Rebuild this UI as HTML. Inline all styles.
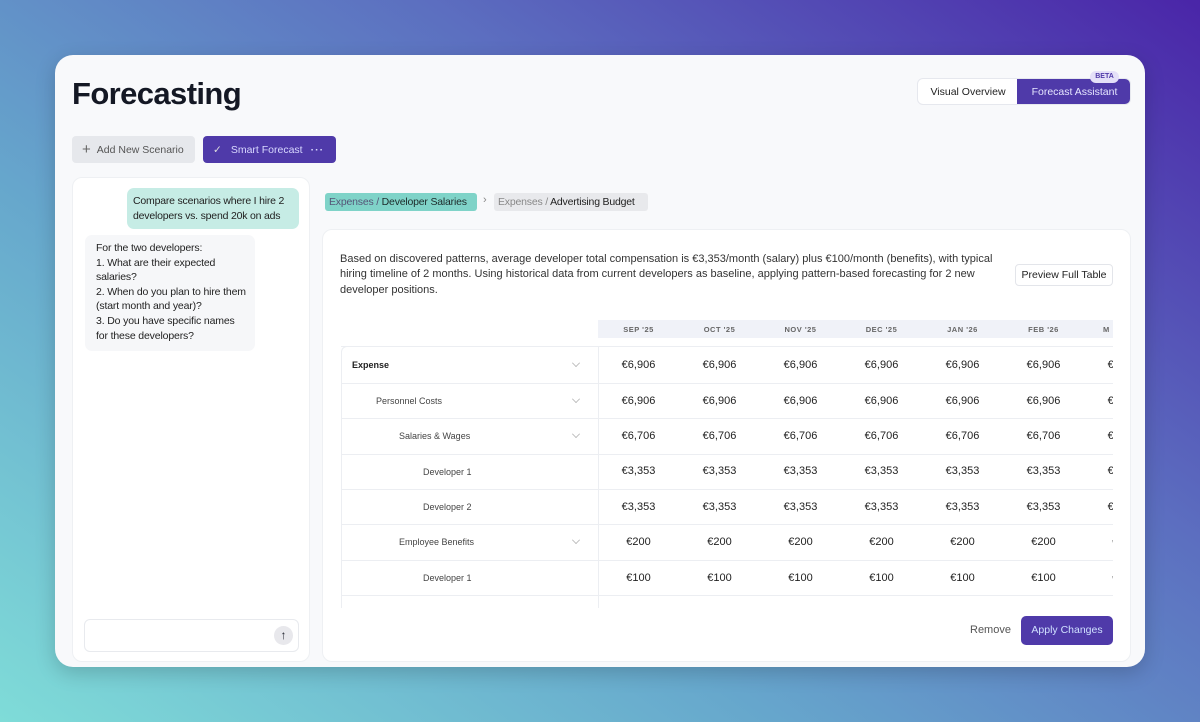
<!DOCTYPE html><html><head><style>
*{box-sizing:border-box;margin:0;padding:0}
body{width:1200px;height:722px;overflow:hidden;font-family:"Liberation Sans",sans-serif;color:#1c1f2a;position:relative;
background:linear-gradient(35deg,#7fdcd8 0%,#66a6cc 35%,#5c6fc0 65%,#4a25a8 100%);}
.card{position:absolute;left:55px;top:55px;width:1090px;height:612px;background:#f8f9fb;border-radius:18px;box-shadow:0 6px 20px rgba(0,0,0,.18)}
.abs{position:absolute}
h1{position:absolute;left:17px;top:21px;font-size:31px;font-weight:bold;color:#141824;letter-spacing:-.6px}
.btn{position:absolute;top:81px;height:27px;border-radius:4px;font-size:10.5px;display:flex;align-items:center}
.panel{position:absolute;background:#fff;border-radius:10px}
.num{position:absolute;width:81px;text-align:center;font-size:11px;color:#222}
.row{position:absolute;left:341px;width:772px;border-top:1px solid #eceef2}
.lbl{position:absolute;font-size:9px;color:#444}
.chev{position:absolute;left:572px;width:8px;height:8px;border-right:1px solid #aaa;border-bottom:1px solid #aaa;transform:rotate(45deg) scale(.7)}
</style></head><body>
<div class="card">
<h1>Forecasting</h1>
<div class="btn" style="left:17px;width:123px;background:#e6e8ec;color:#555;padding-left:10px"><span style="font-size:15px;margin-right:6px;color:#666">+</span>Add New Scenario</div>
<div class="btn" style="left:148px;width:133px;background:#4f3aa9;color:#d8d8ff;padding-left:10px"><span style="margin-right:9px;color:#ddd">✓</span>Smart Forecast<span style="margin-left:8px;font-weight:bold;letter-spacing:1px">···</span></div>
<div class="abs" style="left:862px;top:23px;width:214px;height:27px;border-radius:6px;background:#fff;border:1px solid #e6e8ee;overflow:hidden">
<div class="abs" style="left:0;top:0;width:100px;height:27px;font-size:10.5px;line-height:26px;text-align:center;color:#222">Visual Overview</div>
<div class="abs" style="left:99px;top:0;width:115px;height:27px;background:#4f3aa9;color:#e6e6ff;font-size:10.5px;line-height:26px;text-align:center">Forecast Assistant</div></div>
<div class="abs" style="left:1035px;top:16px;width:29px;height:12px;border-radius:6px;background:#e4e0f8;color:#4f3aa9;font-size:7px;font-weight:bold;text-align:center;line-height:12px">BETA</div>

<div class="panel" style="left:17px;top:122px;width:238px;height:485px;border:1px solid #eef0f3">
<div class="abs" style="left:54px;top:10px;width:172px;height:41px;background:#c6ece5;border-radius:7px;font-size:10.5px;letter-spacing:-.2px;line-height:15px;padding:6px 4px 0 6px;color:#222">Compare scenarios where I hire 2 developers vs. spend 20k on ads</div>
<div class="abs" style="left:12px;top:57px;width:170px;height:116px;background:#f6f7f9;border-radius:7px;font-size:10.5px;letter-spacing:-.15px;line-height:14.6px;padding:6px 8px 6px 11px;color:#222">For the two developers:<br>1. What are their expected salaries?<br>2. When do you plan to hire them (start month and year)?<br>3. Do you have specific names for these developers?</div>
<div class="abs" style="left:11px;top:441px;width:215px;height:33px;border:1px solid #e8eaee;border-radius:6px"><div class="abs" style="left:189px;top:6px;width:19px;height:19px;border-radius:50%;background:#e8e8ec;text-align:center;font-size:12px;line-height:19px">↑</div></div>
</div>
<div class="abs" style="left:270px;top:138px;width:152px;height:18px;padding:0 4px;background:#7fd3c8;border-radius:3px;font-size:10.5px;letter-spacing:-.2px;line-height:18px;color:#1d2a2a;white-space:nowrap"><span style="color:#557">Expenses / </span>Developer Salaries</div>
<div class="abs" style="left:428px;top:139px;font-size:11px;color:#888">›</div>
<div class="abs" style="left:439px;top:138px;width:154px;height:18px;padding:0 4px;background:#e8e9ec;border-radius:3px;font-size:10.5px;letter-spacing:-.2px;line-height:18px;color:#222;white-space:nowrap"><span style="color:#888">Expenses / </span>Advertising Budget</div>
</div>

<div class="panel" style="left:322px;top:229px;width:809px;height:433px;border:1px solid #eef0f3"></div>
<div class="abs" style="left:340px;top:252px;width:660px;font-size:11px;line-height:15.3px;color:#333">Based on discovered patterns, average developer total compensation is €3,353/month (salary) plus €100/month (benefits), with typical hiring timeline of 2 months. Using historical data from current developers as baseline, applying pattern-based forecasting for 2 new developer positions.</div>
<div class="abs" style="left:1015px;top:264px;width:98px;height:22px;border:1px solid #e3e5ea;border-radius:4px;font-size:10.5px;line-height:20px;text-align:center;color:#222">Preview Full Table</div>

<div class="abs" style="left:598px;top:320px;width:515px;height:18px;background:#f0f2f8;overflow:hidden;font-size:7.5px;font-weight:bold;color:#666;letter-spacing:.5px">
<span class="abs" style="left:0;width:81px;text-align:center;top:5px">SEP '25</span><span class="abs" style="left:81px;width:81px;text-align:center;top:5px">OCT '25</span><span class="abs" style="left:162px;width:81px;text-align:center;top:5px">NOV '25</span><span class="abs" style="left:243px;width:81px;text-align:center;top:5px">DEC '25</span><span class="abs" style="left:324px;width:81px;text-align:center;top:5px">JAN '26</span><span class="abs" style="left:405px;width:81px;text-align:center;top:5px">FEB '26</span><span class="abs" style="left:505px;top:5px">M</span></div>
<div class="abs" style="left:341px;top:346px;width:258px;height:262px;border:1px solid #eceef2;border-bottom:none;border-radius:6px 0 0 0"></div>
<div class="abs" style="left:341px;top:346px;width:772px;height:262px;border-top:1px solid #eceef2;overflow:hidden"></div>
<div class="row" style="top:383px"></div><div class="row" style="top:418px"></div><div class="row" style="top:454px"></div><div class="row" style="top:489px"></div><div class="row" style="top:524px"></div><div class="row" style="top:560px"></div><div class="row" style="top:595px"></div>
<div class="lbl" style="left:352px;top:360px;font-weight:bold;color:#222">Expense</div><div class="chev" style="top:359px"></div>
<div class="lbl" style="left:376px;top:396px">Personnel Costs</div><div class="chev" style="top:395px"></div>
<div class="lbl" style="left:399px;top:431px">Salaries &amp; Wages</div><div class="chev" style="top:430px"></div>
<div class="lbl" style="left:423px;top:467px">Developer 1</div>
<div class="lbl" style="left:423px;top:502px">Developer 2</div>
<div class="lbl" style="left:399px;top:537px">Employee Benefits</div><div class="chev" style="top:536px"></div>
<div class="lbl" style="left:423px;top:573px">Developer 1</div>
<div class="abs" style="left:598px;top:346px;width:515px;height:262px;overflow:hidden">
<div style="position:relative">
<script>
var v=[["€6,906",12],["€6,906",48],["€6,706",83],["€3,353",118],["€3,353",154],["€200",189],["€100",225]];
var h="";v.forEach(function(r){for(var i=0;i<7;i++)h+='<div class="num" style="left:'+(i*81)+'px;top:'+(r[1]+0.5)+'px">'+r[0]+'</div>';});document.write(h);
</script></div></div>
<div class="abs" style="left:970px;top:624px;font-size:11px;color:#555">Remove</div>
<div class="abs" style="left:1021px;top:616px;width:92px;height:29px;background:#4f3aa9;border-radius:5px;color:#cfe0ff;font-size:10.5px;line-height:29px;text-align:center">Apply Changes</div>
</body></html>
